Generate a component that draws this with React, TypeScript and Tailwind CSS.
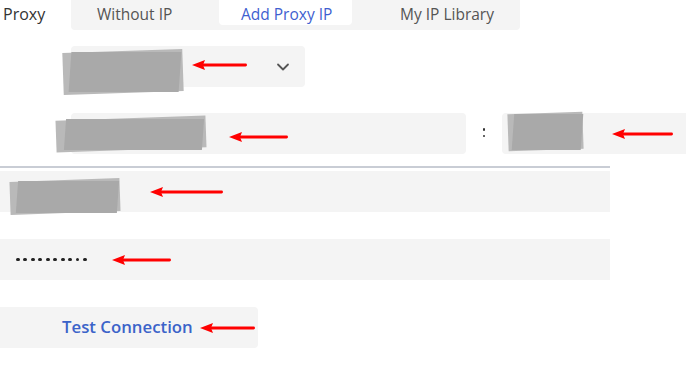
import React from "react";

function Arrow({ w }: { w: number }) {
  return (
    <svg width={w} height={12} viewBox={`0 0 ${w} 12`} className="block shrink-0">
      <polygon points="0,6 13,1 11,6 13,11" fill="#ff0000" />
      <rect x={10} y={4.6} width={w - 11} height={2.8} rx={1.4} fill="#ff0000" />
    </svg>
  );
}

function Blob({ className }: { className: string }) {
  return (
    <div className={`relative shrink-0 ${className}`}>
      <div className="absolute inset-0 bg-[#b9b9b9] rotate-[-2deg]" />
      <div className="absolute left-[6%] right-[2%] top-[4%] bottom-0 bg-[#a9a9a9] skew-x-[-4deg]" />
    </div>
  );
}

export default function App() {
  const font = { fontFamily: '"Open Sans", "Noto Sans", sans-serif' };
  return (
    <div className="w-[686px] h-[392px] bg-white flex flex-col overflow-hidden" style={font}>
      {/* Row 1: label + tabs */}
      <div className="flex items-start h-[46px]">
        <div className="w-[71px] pl-[3px] pt-[3px] text-[16px] text-[#333] leading-[22px]">Proxy</div>
        <div className="w-[449px] h-[30px] bg-[#f4f4f4] rounded-b-[4px] flex items-start pl-[26px] text-[15.5px] leading-[22px]">
          <div className="w-[122px] pt-[3px] text-[#555]">Without IP</div>
          <div className="w-[133px] h-[25px] bg-white rounded-b-[4px] pt-[3px] pl-[22px] text-[#3f5fd0]">Add Proxy IP</div>
          <div className="pt-[3px] pl-[48px] text-[#555]">My IP Library</div>
        </div>
      </div>

      {/* Row 2: select */}
      <div className="pl-[71px] h-[67px]">
        <div className="w-[234px] h-[41px] bg-[#f4f4f4] rounded-[4px] flex items-center pr-[14px]">
          <Blob className="-ml-[8px] w-[120px] h-[42px] translate-y-[5px]" />
          <div className="ml-[9px] -translate-y-[2px]"><Arrow w={56} /></div>
          <div className="flex-1" />
          <svg width="16" height="16" viewBox="0 0 16 16" className="block">
            <path d="M3 5.5 L8 10.5 L13 5.5" fill="none" stroke="#555" strokeWidth="1.8" strokeLinecap="round" strokeLinejoin="round" />
          </svg>
        </div>
      </div>

      {/* Row 3: host + port */}
      <div className="flex items-center h-[41px] pl-[71px]">
        <div className="w-[395px] h-[41px] bg-[#f4f4f4] rounded-[4px] flex items-center">
          <Blob className="-ml-[15px] w-[150px] h-[32px]" />
          <div className="ml-[23px] translate-y-[3px]"><Arrow w={60} /></div>
        </div>
        <div className="w-[36px] flex flex-col items-center gap-[4px] -translate-y-[1px]">
          <div className="w-[2.4px] h-[2.4px] rounded-full bg-[#333]" />
          <div className="w-[2.4px] h-[2.4px] rounded-full bg-[#333]" />
        </div>
        <div className="flex-1 h-[41px] bg-[#f4f4f4] rounded-l-[4px] flex items-center">
          <Blob className="ml-[6px] w-[75px] h-[37px] -translate-y-[2px]" />
          <div className="ml-[29px]"><Arrow w={62} /></div>
        </div>
      </div>

      {/* Separator */}
      <div className="w-[610px] h-[2px] bg-[#c9cdd5] mt-[12px]" />

      {/* Username field */}
      <div className="w-[610px] h-[41px] bg-[#f4f4f4] mt-[3px] flex items-center pl-[10px]">
        <Blob className="w-[110px] h-[33px] translate-y-[5px]" />
        <div className="ml-[30px]"><Arrow w={74} /></div>
      </div>

      {/* Password field */}
      <div className="w-[610px] h-[41px] bg-[#f4f4f4] mt-[27px] flex items-center pl-[16px]">
        <div className="flex gap-[3.9px] items-center">
          {Array.from({ length: 10 }).map((_, i) => (
            <div key={i} className="w-[3.6px] h-[3.6px] rounded-full bg-[#222]" />
          ))}
        </div>
        <div className="ml-[25px]"><Arrow w={60} /></div>
      </div>

      {/* Test connection */}
      <div className="w-[258px] h-[41px] bg-[#f4f4f4] rounded-r-[4px] mt-[27px] flex items-center pl-[62px]">
        <span className="text-[16.8px] font-semibold text-[#3b63c9] leading-none">Test Connection</span>
        <div className="ml-[7px]"><Arrow w={56} /></div>
      </div>
    </div>
  );
}
